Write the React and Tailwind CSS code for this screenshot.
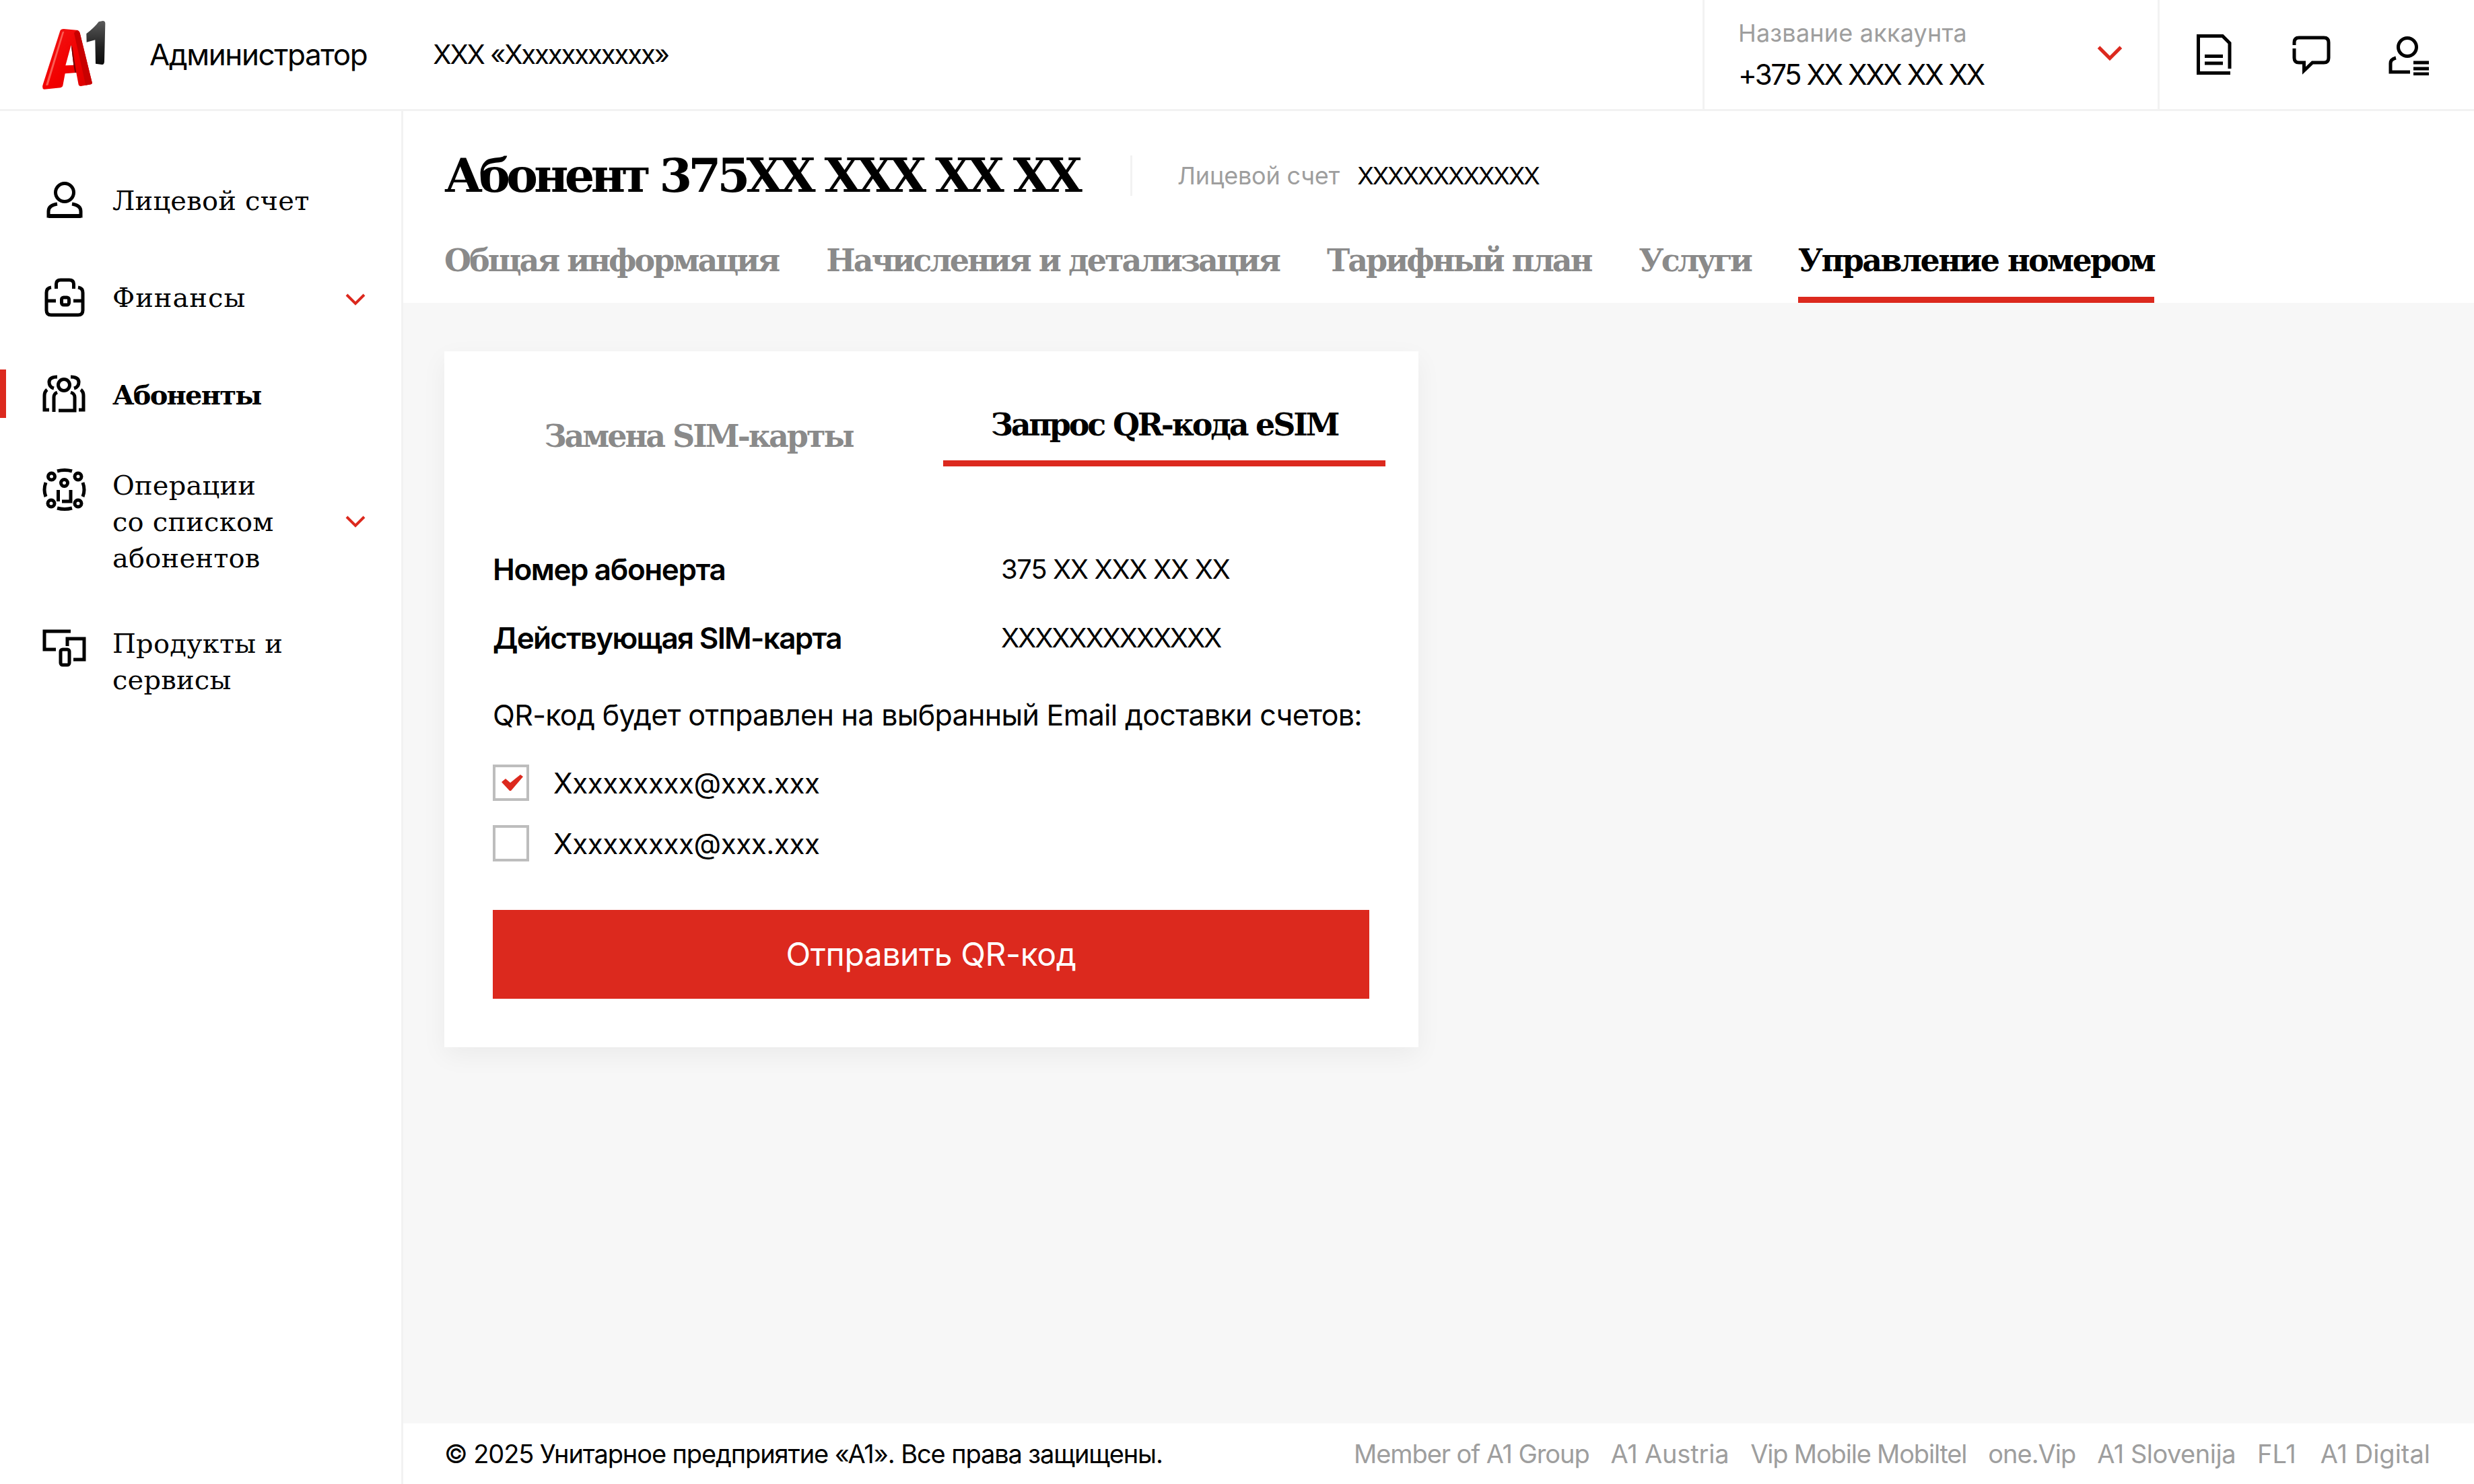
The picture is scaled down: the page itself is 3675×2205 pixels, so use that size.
import React from 'react';

const sans = "font-['Inter',sans-serif]";
const slab = "font-['DejaVu_Serif',serif]";

function Logo() {
  return (
    <svg width="100" height="110" viewBox="60 25 300 330" className="mt-[6px] shrink-0">
      <defs>
        <linearGradient id="aFace" x1="0" y1="0" x2="1" y2="1">
          <stop offset="0" stopColor="#f01a1a" />
          <stop offset="0.55" stopColor="#f20000" />
          <stop offset="1" stopColor="#d80000" />
        </linearGradient>
        <linearGradient id="one" x1="0" y1="0" x2="0" y2="1">
          <stop offset="0" stopColor="#5a5a5a" />
          <stop offset="0.6" stopColor="#222222" />
          <stop offset="1" stopColor="#0c0c0c" />
        </linearGradient>
      </defs>
      <path d="M265 88Q300 62 320 35L338 31Q349 31 349 43L345 212Q345 226 335 226L306 222L304 116L266 126Z" fill="url(#one)" />
      <path fillRule="evenodd" d="M70 328Q68 322 72 312L148 75Q152 66 165 67L222 72Q232 73 236 85L290 305Q292 312 285 314L240 322Q232 322 230 315L220 262L170 266L160 320Q158 328 150 329L78 336Q70 336 70 328ZM172 230L208 228L197 138Z" fill="url(#aFace)" />
      <path d="M197 138L208 228L214 262L220 262L203 150Z" fill="#7a0000" />
      <path d="M222 72Q232 73 236 85L290 305Q292 312 285 314L262 318L210 85Z" fill="#c80000" />
      <path d="M84 318L158 80L166 78L94 318Z" fill="#ff7a6e" opacity="0.75" />
    </svg>
  );
}

const S = ({ children, w = 66, h = 66, cls = '' }) => (
  <svg width={w} height={h} viewBox={`0 0 ${w} ${h}`} fill="none" stroke="currentColor" strokeWidth="5" className={`shrink-0 ${cls}`}>
    {children}
  </svg>
);

const PersonIcon = () => (
  <S>
    <circle cx="33" cy="22" r="13.5" />
    <path d="M22 39Q9 41 9 50V57H57V50Q57 41 44 39" />
    <path d="M9 57H57" strokeWidth="6" />
  </S>
);
const FinanceIcon = () => (
  <S>
    <path d="M20.5 20V13Q20.5 7 27 7H40Q46.5 7 46.5 13V20" />
    <path d="M13 18Q6 19 6 26V52Q6 59 13 59H53Q60 59 60 52V26Q60 19 53 18" />
    <path d="M6 38H20M46 38H60" />
    <rect x="28.5" y="33" width="11" height="11" rx="3" />
  </S>
);
const UsersIcon = () => (
  <S>
    <circle cx="32" cy="20" r="8.5" />
    <path d="M22 8Q10 8 10 16Q10 23 17 25M42 8Q54 8 54 16Q54 23 47 25" />
    <path d="M17 60V38Q17 33 22 31M42 31Q48 33 48 38V58H24" />
    <path d="M7 27Q3 30 3 36V57H10M57 27Q61 30 61 36V57H54" />
  </S>
);
const OpsIcon = () => (
  <S>
    <circle cx="32.5" cy="22.5" r="5" />
    <path d="M23.5 33V50M42 33V50H29" />
    <circle cx="13.5" cy="13" r="5" />
    <circle cx="53" cy="13" r="5" />
    <circle cx="13" cy="53" r="5" />
    <circle cx="53" cy="53" r="5" />
    <path d="M22 5Q33 2 44 5M22 60Q33 63 44 60M5 22Q1 33 5 43M60 22Q64 33 60 43" />
  </S>
);
const DevicesIcon = () => (
  <S>
    <path d="M42 9H3V36H20" />
    <path d="M37 31V20H62V51H46" />
    <rect x="27" y="36" width="13" height="23" rx="3" />
  </S>
);
const Chevron = ({ w = 30, h = 18 }) => (
  <svg width={w} height={h} viewBox="0 0 30 18" fill="none" stroke="#dc291e" strokeWidth="4" className="shrink-0">
    <path d="M2 2L15 15L28 2" />
  </svg>
);

const NavItem = ({ icon, iconCls = '', active, chevron, children, cls = '' }) => (
  <div className={`relative flex items-start pl-[63px] pr-[53px] ${cls}`}>
    {active && <div className="absolute -top-[11px] left-0 h-[72px] w-[9px] bg-[#dc291e]" />}
    <div className={`mr-[37px] flex w-[67px] shrink-0 ${iconCls}`}>{icon}</div>
    <div className={`flex-1 ${slab} text-[40px] leading-[54px] text-black ${active ? 'font-bold tracking-[-1.8px]' : 'tracking-[0.2px]'}`}>{children}</div>
    {chevron && (
      <div className="absolute right-[53px] top-0 flex h-full items-center">
        <Chevron />
      </div>
    )}
  </div>
);

const Tab = ({ active, cls = '', children }) => (
  <div className={`flex h-[91px] items-start border-b-[9px] ${cls} ${active ? 'border-[#dc291e] text-black' : 'border-transparent text-[#8a8a8a]'}`}>
    {children}
  </div>
);

const Check = ({ checked, children }) => (
  <div className="flex h-[54px] items-center">
    <div className="mr-[36px] flex h-[54px] w-[54px] shrink-0 items-center justify-center border-[4px] border-[#bdbdbd] bg-white">
      {checked && (
        <svg width="32" height="24" viewBox="0 0 32 24" className="ml-[4px] shrink-0">
          <path d="M0 11L6 6L13 12L28 0L32 3L14 24H12Z" fill="#dc291e" />
        </svg>
      )}
    </div>
    <span className="text-[42px] tracking-[-0.4px] text-black">{children}</span>
  </div>
);

export default function App() {
  return (
    <div className={`flex h-[2205px] w-[3675px] flex-col overflow-hidden bg-white text-black ${sans}`}>
      <header className="flex h-[165px] shrink-0 items-stretch border-b-[3px] border-[#f2f2f2] bg-white">
        <div className="flex items-center pl-[60px]">
          <Logo />
          <span className="ml-[62px] text-[44px] tracking-[-1.4px]">Администратор</span>
          <span className="ml-[98px] text-[40px] tracking-[-2.1px]">ХХХ «Ххххххххххх»</span>
        </div>
        <div className="ml-auto flex w-[679px] items-center border-x-[3px] border-[#f2f2f2] pl-[50px] pr-[52px]">
          <div className="flex-1">
            <div className="text-[36px] leading-[50px] tracking-[0.2px] text-[#9e9e9e]">Название аккаунта</div>
            <div className="mt-[10px] text-[42px] leading-[54px] tracking-[-2.5px]">+375 XX XXX XX XX</div>
          </div>
          <div className="mb-[4px] flex">
            <Chevron w={38} h={24} />
          </div>
        </div>
        <div className="flex w-[467px] items-center pl-[55px] text-black">
          <S w={52} h={62}>
            <path d="M2.5 58V3.5H38.5L49 14V52" />
            <path d="M0 58.5H50M12 33.5H39M12 44H39" />
          </S>
          <S w={60} h={62} cls="ml-[90px]">
            <path d="M3 17V13Q3 6 10 6H47Q54 6 54 13V36Q54 43 47 43H30L17.5 55V43H10Q3 43 3 36V22" />
          </S>
          <S w={62} h={62} cls="ml-[83px]">
            <circle cx="28" cy="20" r="13.5" />
            <path d="M11 36Q3 38 3 44V57H32M37 43H60M37 52H60M37 60H60" />
          </S>
        </div>
      </header>

      <div className="flex min-h-0 flex-1">
        <aside className="flex w-[599px] shrink-0 flex-col border-r-[3px] border-[#f2f2f2] bg-white pt-[106px]">
          <NavItem icon={<PersonIcon />} iconCls="-mt-[7px]">Лицевой счет</NavItem>
          <NavItem icon={<FinanceIcon />} iconCls="-mt-[6px]" chevron cls="mt-[85px]"><span className="tracking-[1px]">Финансы</span></NavItem>
          <NavItem icon={<UsersIcon />} iconCls="-mt-[8px]" active cls="mt-[85px] h-[72px]">Абоненты</NavItem>
          <NavItem icon={<OpsIcon />} iconCls="mt-[1px]" chevron cls="mt-[62px]">Операции<br />со списком<br />абонентов</NavItem>
          <NavItem icon={<DevicesIcon />} cls="mt-[73px]">Продукты и<br />сервисы</NavItem>
        </aside>

        <main className="flex min-w-0 flex-1 flex-col bg-[#f7f7f7]">
          <div className="h-[285px] shrink-0 bg-white pl-[61px]">
            <div className="flex h-[192px] items-center">
              <h1 className={`${slab} text-[70px] font-bold leading-[84px] tracking-[-5.7px]`}>Абонент 375XX XXX XX XX</h1>
              <div className="ml-[77px] h-[60px] w-[3px] bg-[#f2f2f2]" />
              <span className="ml-[67px] text-[36px] leading-[44px] tracking-[-0.2px] text-[#9e9e9e]">Лицевой счет</span>
              <span className="ml-[26px] text-[36px] leading-[44px] tracking-[-2.1px]">XXXXXXXXXXXX</span>
            </div>
            <div className={`mt-[2px] flex gap-[71px] ${slab} text-[46px] font-bold leading-[56px] tracking-[-3px]`}>
              <Tab>Общая информация</Tab>
              <Tab>Начисления и детализация</Tab>
              <Tab>Тарифный план</Tab>
              <Tab cls="tracking-[-4px]">Услуги</Tab>
              <Tab active cls="tracking-[-2.6px]">Управление номером</Tab>
            </div>
          </div>

          <div className="min-h-0 flex-1 pl-[61px] pt-[72px]">
            <section className="w-[1447px] bg-white pb-[72px] pl-[72px] pr-[73px] shadow-[0_12px_36px_rgba(0,0,0,0.05)]">
              <div className={`flex h-[171px] items-end ${slab} text-[46px] font-bold leading-[56px] tracking-[-3px]`}>
                <div className="flex h-[80px] w-[669px] shrink-0 justify-center pr-[58px] pt-[7px] text-[#8a8a8a]">Замена SIM-карты</div>
                <div className="flex h-[81px] w-[657px] shrink-0 justify-center border-b-[9px] border-[#dc291e] tracking-[-3.2px]">
                  <span className="-mt-[9px]">Запрос QR-кода eSIM</span>
                </div>
              </div>
              <div className="mt-[126px] flex flex-col gap-[48px] text-[44px] leading-[54px]">
                <div className="flex items-center">
                  <div className="w-[755px] font-semibold tracking-[-1.4px]">Номер абонерта</div>
                  <div className="text-[40px] tracking-[-1.4px]">375 XX XXX XX XX</div>
                </div>
                <div className="flex items-center">
                  <div className="w-[755px] font-semibold tracking-[-1.7px]">Действующая SIM-карта</div>
                  <div className="text-[40px] tracking-[-2.2px]">XXXXXXXXXXXXX</div>
                </div>
              </div>
              <div className="mt-[60px] whitespace-nowrap text-[43px] leading-[54px] tracking-[-0.7px]">QR-код будет отправлен на выбранный Email доставки счетов:</div>
              <div className="mt-[47px] flex flex-col gap-[36px]">
                <Check checked>Ххххххххх@ххх.ххх</Check>
                <Check>Ххххххххх@ххх.ххх</Check>
              </div>
              <button className="mt-[72px] flex h-[132px] w-[1302px] items-center justify-center bg-[#dc291e] text-[48px] tracking-[-0.4px] text-white">Отправить QR-код</button>
            </section>
          </div>

          <footer className="flex h-[90px] shrink-0 items-center justify-between bg-white pl-[61px] pr-[65px]">
            <span className="text-[38px] tracking-[-1.1px]">© 2025 Унитарное предприятие «А1». Все права защищены.</span>
            <div className="flex gap-[32px] text-[38px] text-[#9e9e9e]">
              <span className="tracking-[-1.1px]">Member of A1 Group</span>
              <span className="tracking-[-0.2px]">A1 Austria</span>
              <span className="tracking-[-1.2px]">Vip Mobile Mobiltel</span>
              <span className="tracking-[-1px]">one.Vip</span>
              <span className="tracking-[-0.5px]">A1 Slovenija</span>
              <span>FL1</span>
              <span className="ml-[4px]">A1 Digital</span>
            </div>
          </footer>
        </main>
      </div>
    </div>
  );
}
